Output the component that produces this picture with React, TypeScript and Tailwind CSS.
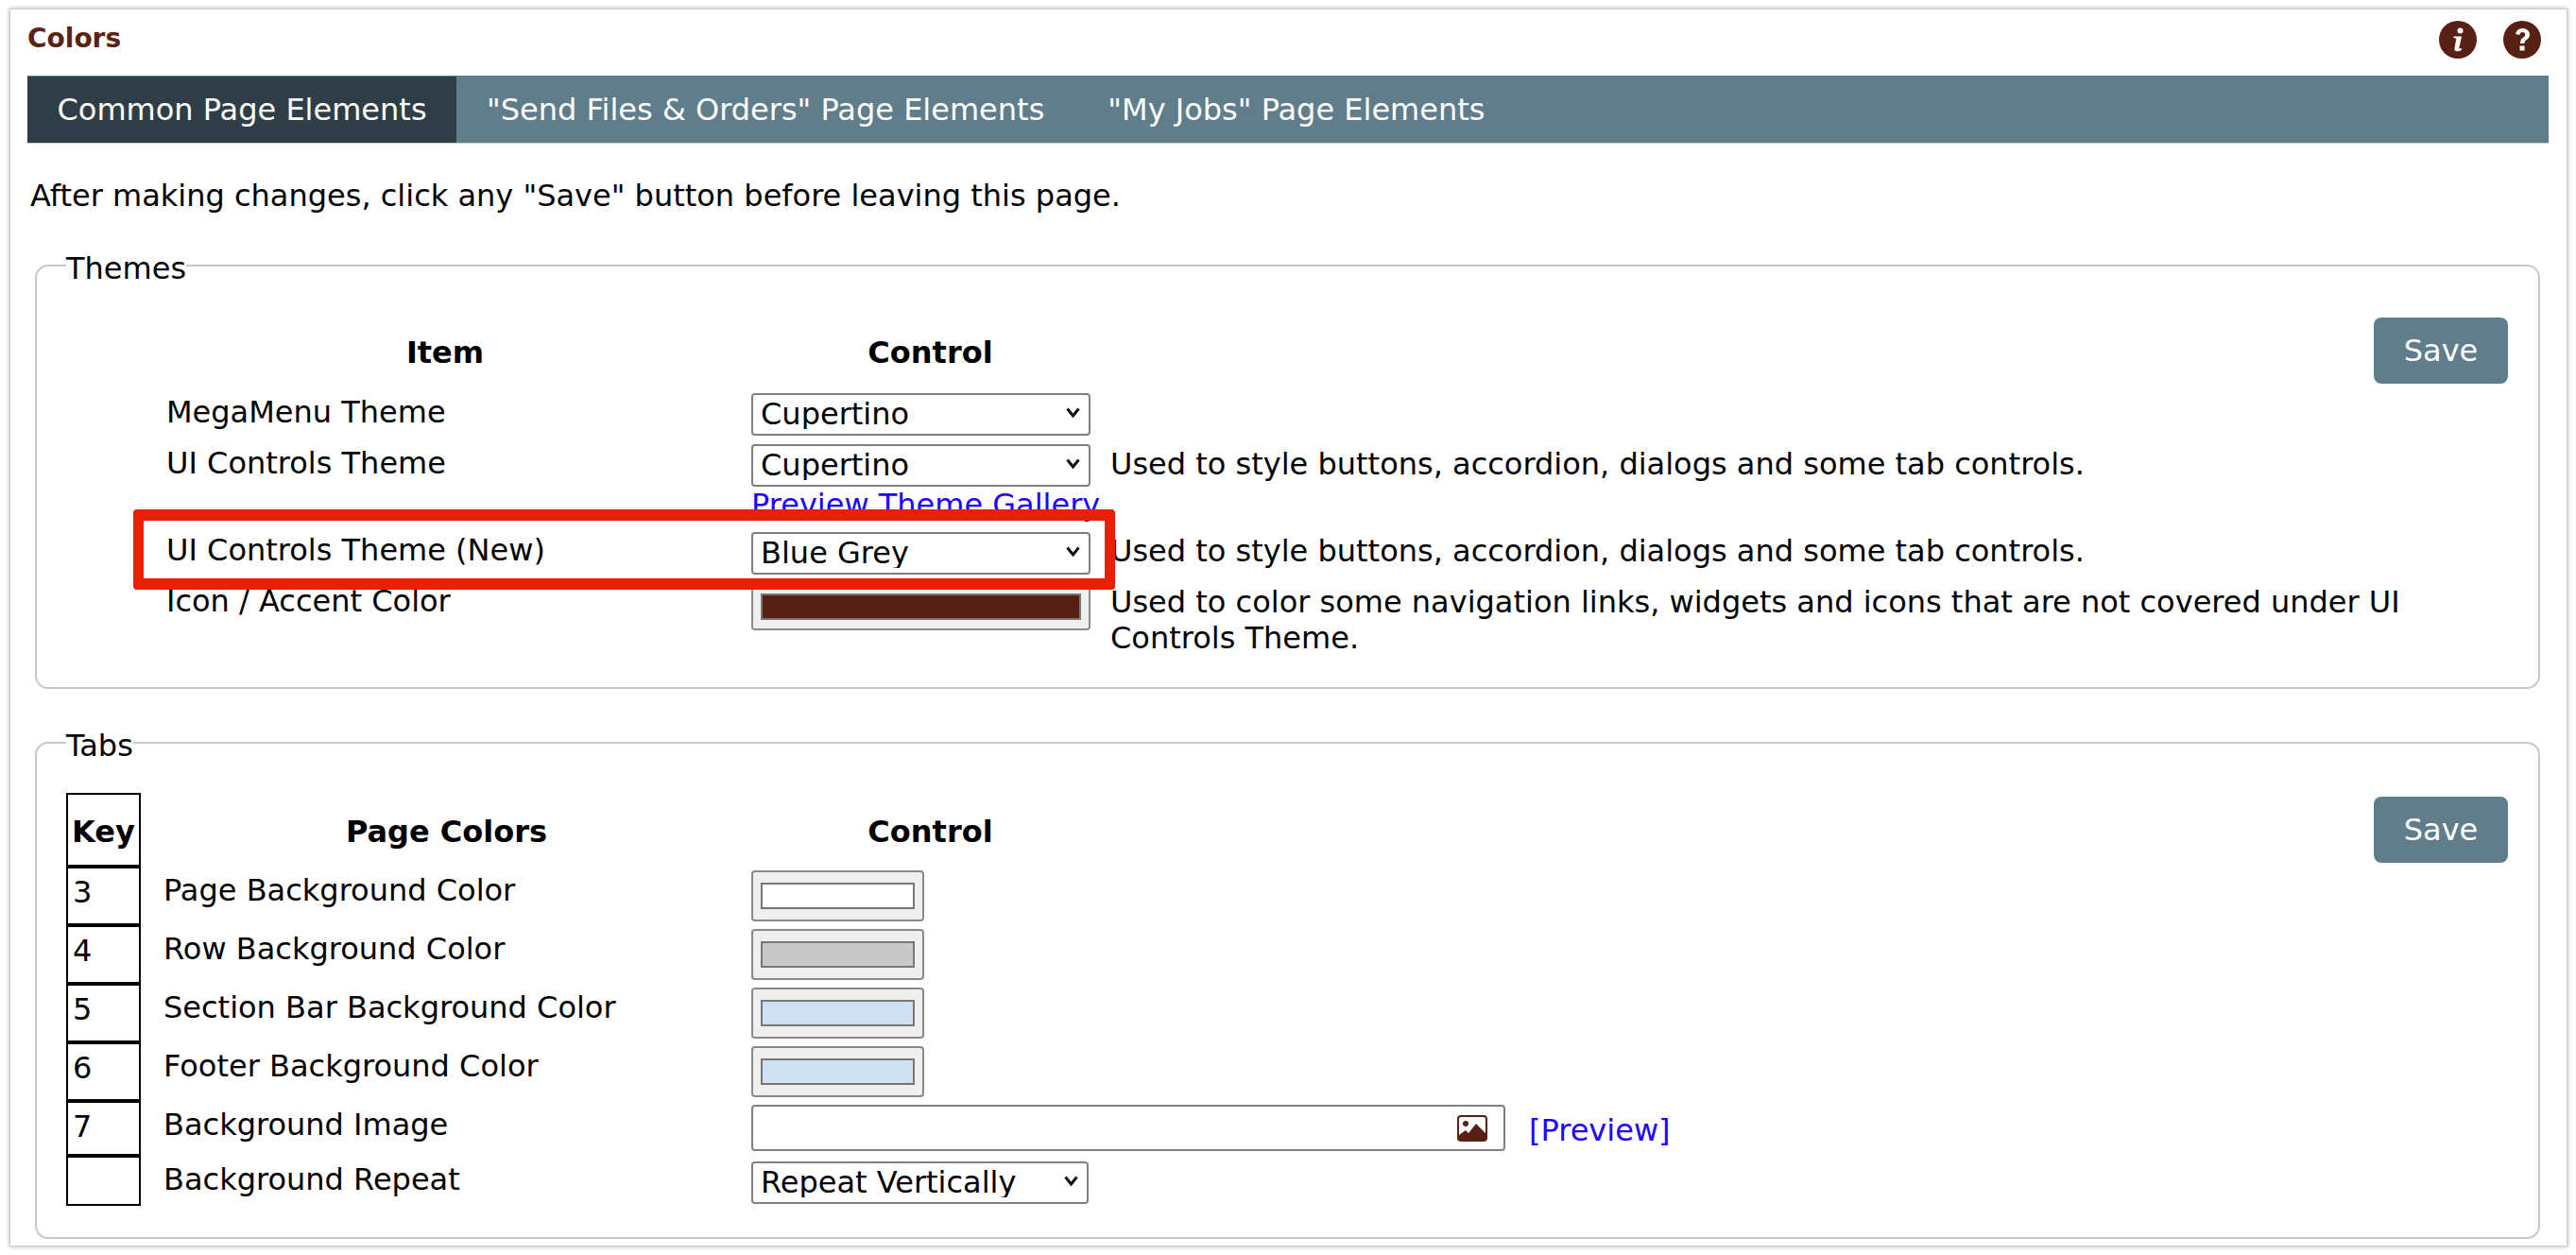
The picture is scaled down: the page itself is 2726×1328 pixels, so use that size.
import type { FC, ReactNode } from "react";

const Swatch: FC<{ color: string; className: string }> = ({ color, className }) => (
  <button className={`flex items-stretch rounded-[4px] border-2 border-[#8a8a8a] bg-[#efefef] px-[8px] ${className}`}>
    <span className={`block h-full w-full border-2 border-[#777] ${color}`} />
  </button>
);

const Select: FC<{ value: string; w?: string }> = ({ value, w = "w-[359px]" }) => (
  <div className={`relative h-[45px] ${w}`}>
    <select
      defaultValue={value}
      className="h-full w-full appearance-none rounded-[4px] border-2 border-[#808080] bg-white pl-[8px] text-[32px] leading-none text-black"
    >
      <option>{value}</option>
    </select>
    <svg className="absolute right-[11px] top-[17px]" width="15" height="11" viewBox="0 0 15 11">
      <path d="M1.500 1.500 7.500 9l6-7.500" fill="none" stroke="#111" strokeWidth="3" />
    </svg>
  </div>
);

const SaveButton: FC<{ top: string }> = ({ top }) => (
  <button className={`absolute right-[32px] h-[70px] w-[142px] rounded-[8px] bg-[#607d8b] text-[32px] text-white ${top}`}>
    Save
  </button>
);

const Box: FC<{ title: string; className: string; children: ReactNode }> = ({ title, className, children }) => (
  <fieldset className={`relative ml-[8px] w-[2651px] rounded-[14px] border-2 border-[#c8c8c8] ${className}`}>
    <legend className="ml-[31px] h-[24px] text-[32px] leading-[30px] text-black">{title}</legend>
    {children}
  </fieldset>
);

const ThemeRow: FC<{ label: string; h: string; pt: string; control: ReactNode; note?: ReactNode }> = ({ label, h, pt, control, note }) => (
  <div className={`flex items-start ${h}`}>
    <div className={`w-[756px] pl-[137px] leading-[36px] ${pt}`}>{label}</div>
    <div className="w-[380px]">{control}</div>
    {note && <div className={`w-[1400px] leading-[38px] ${pt}`}>{note}</div>}
  </div>
);

const KeyRow: FC<{ k: string; label: string; h: string; children: ReactNode }> = ({ k, label, h, children }) => (
  <div className={`flex items-start ${h}`}>
    <div className={`w-[79px] shrink-0 border-2 border-black pl-[5px] pt-[7px] leading-[36px] ${h}`}>{k}</div>
    <div className="w-[646px] pl-[24px] pt-[7px] leading-[36px]">{label}</div>
    {children}
  </div>
);

const App: FC = () => {
  return (
    <div className="h-[1328px] w-[2726px] overflow-hidden bg-white pl-[10px] pt-[9px] text-[32px] text-black [font-family:'DejaVu_Sans',sans-serif]">
      <div className="h-[1310px] w-[2707px] border border-[#d0d0d0] pl-[18px] shadow-[0_0_4px_rgba(0,0,0,0.35)]">
        <div className="flex h-[70px] items-center justify-between pr-[27px]">
          <div className="mt-[-9px] text-[28px] font-bold text-[#5a2313]">Colors</div>
          <div className="mt-[-6px] flex gap-[28px]">
            <svg width="40" height="40" viewBox="0 0 40 40">
              <circle cx="20" cy="20" r="20" fill="#562113" />
              <circle cx="22.500" cy="10.500" r="3" fill="#fff" />
              <path d="M15.500 16.500h8.500l-2.800 13 2.600-.6.300 1.800c-2 1-3.600 1.500-5 1.500-2.200 0-3-1.200-2.600-3.200l1.900-10.500-2.900-.3z" fill="#fff" />
            </svg>
            <svg width="40" height="40" viewBox="0 0 40 40">
              <circle cx="20" cy="20" r="20" fill="#562113" />
              <path d="M13 14c1-4 4-6 7.500-6 4.500 0 7.500 3 7.500 6.500 0 3-1.500 4.500-3.500 5.800-1.500 1-2 1.700-2 3.700h-4.500c0-3.500 1-5 3-6.300 1.500-1 2.300-1.800 2.300-3.200 0-1.500-1.200-2.600-2.800-2.600-1.700 0-2.800 1-3.300 3z" fill="#fff" />
              <rect x="17.500" y="26.500" width="5" height="5" fill="#fff" />
            </svg>
          </div>
        </div>

        <div className="flex h-[71px] w-[2668px] items-center bg-[#607d8b] pt-[1px] text-white shadow-[0_1px_1px_rgba(0,0,0,0.2)]">
          <div className="flex h-full w-[454px] items-center justify-center bg-[#2f3e46]">Common Page Elements</div>
          <div className="ml-[32px]">"Send Files &amp; Orders" Page Elements</div>
          <div className="ml-[67px]">"My Jobs" Page Elements</div>
        </div>

        <p className="ml-[3px] mt-[38px] leading-[36px]">After making changes, click any "Save" button before leaving this page.</p>

        <Box title="Themes" className="mt-[44px] h-[460px]">
          <SaveButton top="top-[43px]" />
          <div className="flex pt-[62px] font-bold leading-[36px]">
            <div className="w-[756px] pl-[108px] text-center">Item</div>
            <div className="w-[379px] text-center">Control</div>
          </div>
          <div className="mt-[23px]">
            <ThemeRow label="MegaMenu Theme" h="h-[54px]" pt="pt-[4px]" control={<Select value="Cupertino" />} />
            <ThemeRow
              label="UI Controls Theme"
              h="h-[93px]"
              pt="pt-[4px]"
              control={
                <>
                  <Select value="Cupertino" />
                  <a className="mt-[3px] block whitespace-nowrap leading-[36px] text-[#2000ff]">Preview Theme Gallery</a>
                </>
              }
              note="Used to style buttons, accordion, dialogs and some tab controls."
            />
            <ThemeRow
              label="UI Controls Theme (New)"
              h="h-[56px]"
              pt="pt-[3px]"
              control={<Select value="Blue Grey" />}
              note="Used to style buttons, accordion, dialogs and some tab controls."
            />
            <ThemeRow
              label="Icon / Accent Color"
              h="h-[70px]"
              pt="pt-[1px]"
              control={<Swatch color="bg-[#562113]" className="h-[50px] w-[359px] py-[9px]" />}
              note="Used to color some navigation links, widgets and icons that are not covered under UI Controls Theme."
            />
          </div>
          <div className="absolute left-[102px] top-[246px] h-[85px] w-[1039px] rounded-[4px] border-x-[11px] border-y-[12px] border-[#e82000]" />
        </Box>

        <Box title="Tabs" className="mt-[45px] h-[537px]">
          <SaveButton top="top-[45px]" />
          <div className="ml-[31px] mt-[41px]">
            <div className="flex h-[78px] items-start">
              <div className="flex h-[78px] w-[79px] shrink-0 items-center justify-center border-2 border-black pt-[3px] font-bold">Key</div>
              <div className="flex h-full w-[646px] items-center justify-center pl-[1px] pt-[3px] font-bold">Page Colors</div>
              <div className="flex h-full w-[379px] items-center justify-center pt-[3px] font-bold">Control</div>
            </div>
            <KeyRow k="3" label="Page Background Color" h="h-[62px]">
              <Swatch color="bg-white" className="mt-[4px] h-[54px] w-[183px] py-[11px]" />
            </KeyRow>
            <KeyRow k="4" label="Row Background Color" h="h-[62px]">
              <Swatch color="bg-[#c8c8c8]" className="mt-[4px] h-[54px] w-[183px] py-[11px]" />
            </KeyRow>
            <KeyRow k="5" label="Section Bar Background Color" h="h-[62px]">
              <Swatch color="bg-[#cfe0f2]" className="mt-[4px] h-[54px] w-[183px] py-[11px]" />
            </KeyRow>
            <KeyRow k="6" label="Footer Background Color" h="h-[62px]">
              <Swatch color="bg-[#cfe0f2]" className="mt-[4px] h-[54px] w-[183px] py-[11px]" />
            </KeyRow>
            <KeyRow k="7" label="Background Image" h="h-[58px]">
              <div className="mt-[4px] flex h-[49px] w-[798px] items-center justify-end rounded-[4px] border-2 border-[#808080] pr-[17px]">
                <svg width="32" height="28" viewBox="0 0 32 28">
                  <rect x="1" y="1" width="30" height="26" rx="3" fill="#fff" stroke="#562113" strokeWidth="2" />
                  <circle cx="9" cy="9" r="3" fill="#562113" />
                  <path d="M2 26v-5l7-5 3 3 8-10 10 10v7z" fill="#562113" />
                </svg>
              </div>
              <a className="ml-[25px] mt-[13px] leading-[36px] text-[#2000ff]">[Preview]</a>
            </KeyRow>
            <KeyRow k="" label="Background Repeat" h="h-[53px]">
              <div className="mt-[4px]">
                <Select value="Repeat Vertically" w="w-[357px]" />
              </div>
            </KeyRow>
          </div>
        </Box>
      </div>
    </div>
  );
};

export default App;
